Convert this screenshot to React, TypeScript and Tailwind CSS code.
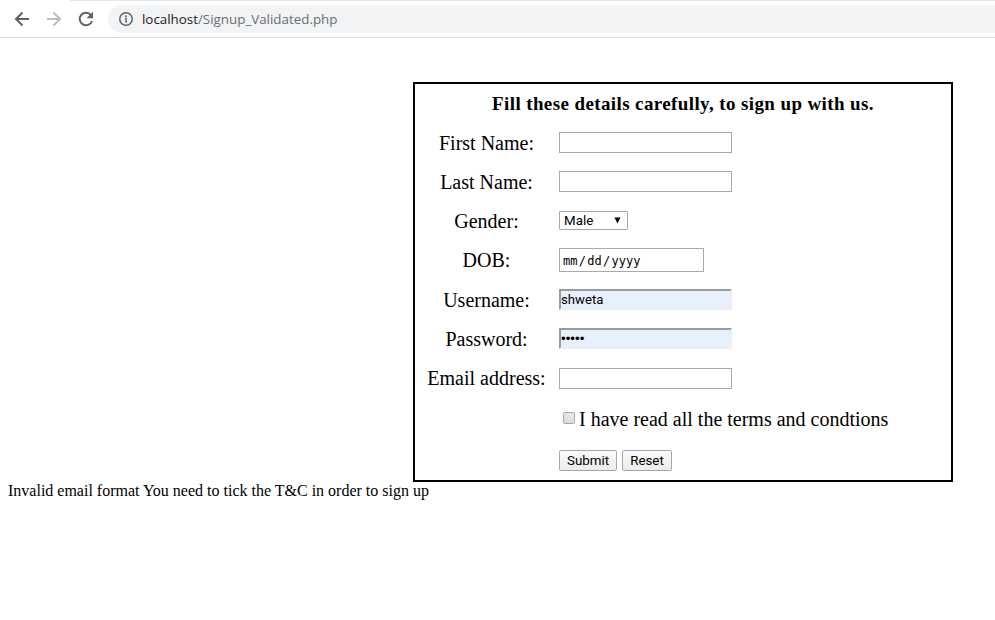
import type { ReactNode } from "react";

const plain =
  "block h-[21px] w-[173px] appearance-none border border-[#a9a9a9] bg-white px-[2px] outline-none";
const filled =
  "flex h-[21px] w-[173px] items-center border-2 border-t-[#9a9a9a] border-l-[#9a9a9a] border-r-[#eeeeee] border-b-[#eeeeee] bg-[#e8f0fe]";
const button =
  "mt-[2px] h-[21px] rounded-[2px] border border-[#a6a6a6] bg-gradient-to-b from-[#fafafa] to-[#ececec] text-center font-['Roboto','Liberation_Sans',sans-serif] text-[13.33px] leading-[18px] text-black";

function Row({ label, height = "h-[39px]", children }: { label?: string; height?: string; children: ReactNode }) {
  return (
    <div className={`flex items-center ${height}`}>
      <div className="w-[143px] shrink-0 text-center text-[20px] leading-[22px] whitespace-nowrap">{label}</div>
      <div className="ml-px flex items-center">{children}</div>
    </div>
  );
}

function Toolbar() {
  return (
    <header className="h-[38px] border-b border-[#dadce0] bg-white">
      <div className="ml-[70px] h-px bg-[#e4e7ea]" />
      <div className="flex h-[36px] items-center pl-[10px]">
        <svg width="24" height="24" viewBox="0 0 24 24" fill="none" stroke="#5f6368" strokeWidth="2">
          <path d="M19 12H6M12.500 5.500L6 12l6.500 6.500" />
        </svg>
        <svg className="ml-[8px]" width="24" height="24" viewBox="0 0 24 24" fill="none" stroke="#babcbe" strokeWidth="2">
          <path d="M5 12h13M11.500 5.500L18 12l-6.500 6.500" />
        </svg>
        <svg className="ml-[8px]" width="24" height="24" viewBox="0 0 24 24">
          <path d="M17.100 8.200A6.300 6.300 0 1 0 18 14" fill="none" stroke="#5f6368" strokeWidth="2" />
          <path d="M19 4.800v6.500h-6.500z" fill="#5f6368" />
        </svg>
        <div className="ml-[10px] flex h-[28px] flex-1 items-center rounded-l-full bg-[#f1f3f4] pl-[10px]">
          <svg width="16" height="16" viewBox="0 0 16 16" fill="none" stroke="#5f6368">
            <circle cx="8" cy="8" r="6.250" strokeWidth="1.500" />
            <path d="M8 7v4.500M8 4.500v1.700" strokeWidth="1.600" />
          </svg>
          <div className="ml-[8px] font-['Open_Sans','Noto_Sans',sans-serif] text-[13.36px] leading-[20px] whitespace-nowrap text-[#6a6e72]">
            <span className="text-[#202124]">localhost</span>/Signup_Validated.php
          </div>
        </div>
      </div>
    </header>
  );
}

export default function App() {
  return (
    <div className="h-[620px] w-[995px] overflow-hidden bg-white font-['Liberation_Serif','Times_New_Roman',serif] text-black">
      <Toolbar />
      <form className="mt-[44px] ml-[413px] h-[400px] w-[540px] border-2 border-black">
        <h1 className="flex h-[39px] items-center justify-center text-[19px] leading-[22px] font-bold tracking-[0.39px] whitespace-nowrap">
          Fill these details carefully, to sign up with us.
        </h1>
        <Row label="First Name:">
          <input className={plain} type="text" />
        </Row>
        <Row label="Last Name:">
          <input className={plain} type="text" />
        </Row>
        <Row label="Gender:">
          <div className="flex h-[19px] w-[69px] items-center justify-between rounded-[1px] border border-[#a9a9a9] pr-[6px] pl-[4px] font-['Roboto','Liberation_Sans',sans-serif] text-[13.33px] leading-[17px]">
            <span>Male</span>
            <svg width="7" height="7" viewBox="0 0 7 7">
              <path d="M0.500 0.500h6L3.500 6.500z" fill="black" />
            </svg>
          </div>
        </Row>
        <Row label="DOB:" height="h-[40px]">
          <div className="flex h-[24px] w-[145px] items-center border border-[#a9a9a9] pt-[2px] pl-[3px] font-['DejaVu_Sans_Mono','Liberation_Mono',monospace] text-[12px] leading-[18px]">
            <span>mm</span>
            <span className="px-[1.300px]">/</span>
            <span>dd</span>
            <span className="px-[1.300px]">/</span>
            <span>yyyy</span>
          </div>
        </Row>
        <Row label="Username:">
          <div className={filled}>
            <span className="font-['Roboto','Liberation_Sans',sans-serif] text-[13.2px] leading-[17px]">shweta</span>
          </div>
        </Row>
        <Row label="Password:">
          <div className={filled}>
            <span className="font-['Liberation_Sans',sans-serif] text-[13.33px] leading-[17px]">•••••</span>
          </div>
        </Row>
        <Row label="Email address:" height="h-[40px]">
          <input className={plain} type="text" />
        </Row>
        <Row height="h-[41px]">
          <span className="-mt-[2px] ml-[4px] h-[12px] w-[12px] rounded-[2px] border border-[#a8a8a8] bg-gradient-to-b from-[#e8e8e8] to-[#dcdcdc]" />
          <span className="ml-[4px] text-[20px] leading-[22px] whitespace-nowrap">I have read all the terms and condtions</span>
        </Row>
        <Row height="h-[41px]">
          <button type="button" className={`${button} w-[58px]`}>Submit</button>
          <button type="button" className={`${button} ml-[5px] w-[50px]`}>Reset</button>
        </Row>
      </form>
      <p className="ml-[8px] text-[16px] leading-[18px] whitespace-nowrap">
        Invalid email format You need to tick the T&amp;C in order to sign up
      </p>
    </div>
  );
}
